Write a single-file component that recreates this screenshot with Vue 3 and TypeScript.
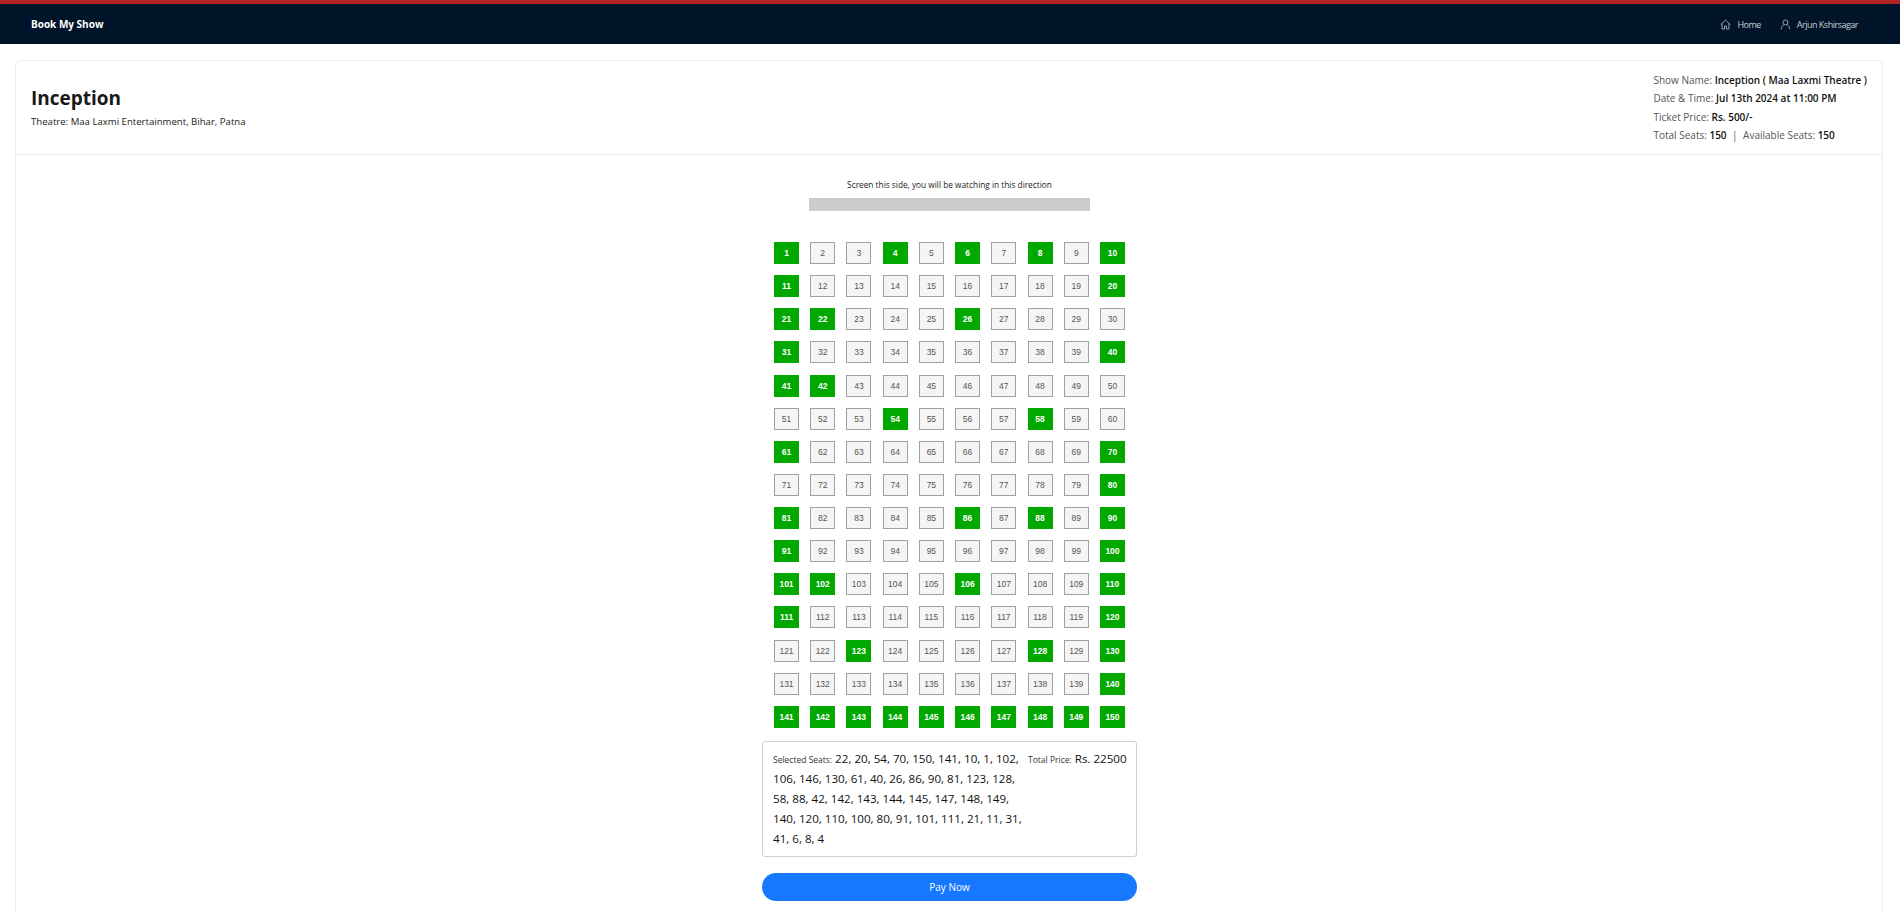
<script setup lang="ts">
const selected = [
  22, 20, 54, 70, 150, 141, 10, 1, 102, 106, 146, 130, 61, 40, 26, 86, 90, 81, 123, 128, 58, 88,
  42, 142, 143, 144, 145, 147, 148, 149, 140, 120, 110, 100, 80, 91, 101, 111, 21, 11, 31, 41, 6,
  8, 4,
];
const ticketPrice = 500;
const seats = Array.from({ length: 150 }, (_, i) => i + 1);

function isSelected(seat: number) {
  return selected.includes(seat);
}
</script>

<template>
  <div class="page">
    <header class="navbar">
      <span class="brand">Book My Show</span>
      <nav class="nav-links">
        <a class="nav-link">
          <svg viewBox="0 0 16 16" width="11" height="11" fill="none" stroke="currentColor" stroke-width="1.1">
            <path d="M1 8.2 8 1.6l7 6.6" />
            <path d="M3 6.6v7.9h3.6v-4.2h2.8v4.2H13V6.6" />
          </svg>
          Home
        </a>
        <a class="nav-link">
          <svg viewBox="0 0 16 16" width="11" height="11" fill="none" stroke="currentColor" stroke-width="1.1">
            <circle cx="8" cy="5" r="3.6" />
            <path d="M1.8 15c.4-3.6 2-5.6 3.6-6.2M14.2 15c-.4-3.6-2-5.6-3.6-6.2" />
          </svg>
          Arjun Kshirsagar
        </a>
      </nav>
    </header>

    <main class="card">
      <section class="card-head">
        <div>
          <h1>Inception</h1>
          <p class="theatre">Theatre: Maa Laxmi Entertainment, Bihar, Patna</p>
        </div>
        <div class="show-info">
          <p>Show Name: <b>Inception ( Maa Laxmi Theatre )</b></p>
          <p>Date &amp; Time: <b>Jul 13th 2024 at 11:00 PM</b></p>
          <p>Ticket Price: <b>Rs. 500/-</b></p>
          <p>Total Seats: <b>150</b><span class="sep">|</span>Available Seats: <b>150</b></p>
        </div>
      </section>

      <section class="card-body">
        <p class="screen-label">Screen this side, you will be watching in this direction</p>
        <div class="screen"></div>

        <div class="seats">
          <button
            v-for="seat in seats"
            :key="seat"
            class="seat"
            :class="{ selected: isSelected(seat) }"
          >
            {{ seat }}
          </button>
        </div>

        <div class="summary">
          <div class="summary-seats">
            <small>Selected Seats:</small> {{ selected.join(", ") }}
          </div>
          <div class="summary-price">
            <small>Total Price:</small> Rs. {{ selected.length * ticketPrice }}
          </div>
        </div>

        <button class="pay">Pay Now</button>
      </section>
    </main>
  </div>
</template>

<style>
html,
body {
  margin: 0;
  background: #fff;
  overflow: hidden;
}
</style>

<style scoped>
.page {
  height: 912px;
  overflow: hidden;
  font-family: "Open Sans", "Noto Sans", sans-serif;
  color: #1a1a1a;
}

.navbar {
  height: 40px;
  border-top: 4px solid #b22222;
  background: #001529;
  display: flex;
  align-items: center;
  justify-content: space-between;
  padding: 0 42px 0 31px;
}

.brand {
  color: #fff;
  font-size: 10px;
  font-weight: 700;
}

.nav-links {
  display: flex;
  gap: 19px;
}

.nav-link {
  display: flex;
  align-items: center;
  gap: 6px;
  color: #c8ccd2;
  font-size: 9px;
  letter-spacing: -0.5px;
}

.card {
  margin: 16px 17px 0 15px;
  border: 1px solid #ececec;
  border-radius: 6px;
  background: #fff;
}

.card-head {
  height: 94px;
  box-sizing: border-box;
  border-bottom: 1px solid #ececec;
  display: flex;
  justify-content: space-between;
  align-items: center;
  padding: 0 15px;
}

h1 {
  margin: 0 0 4.5px;
  font-size: 19px;
  font-weight: 700;
  line-height: 26px;
}

.theatre {
  margin: 0 0 2.5px;
  font-size: 9.6px;
}

.show-info {
  font-size: 10px;
  color: #555;
}

.show-info p {
  margin: 0;
  line-height: 18.5px;
}

.show-info b {
  color: #111;
  font-weight: 600;
}

.sep {
  margin: 0 5.5px;
}

.card-body {
  display: flex;
  flex-direction: column;
  align-items: center;
  padding: 0 0 32px 1px;
}

.screen-label {
  margin: 24px 0 7px;
  font-size: 8.3px;
  line-height: 12px;
}

.screen {
  width: 281px;
  height: 13px;
  background: #ccc;
}

.seats {
  margin-top: 31px;
  width: 351px;
  display: grid;
  grid-template-columns: repeat(10, 25px);
  justify-content: space-between;
  row-gap: 11.14px;
}

.seat {
  width: 25px;
  height: 22px;
  padding: 0;
  box-sizing: border-box;
  border: 1px solid #a0a0a0;
  background: #f5f5f5;
  color: #555;
  font-family: "Liberation Sans", Arial, sans-serif;
  font-size: 8.5px;
}

.seat.selected {
  border-color: #00a800;
  background: #00a800;
  color: #fff;
  font-weight: 700;
}

.summary {
  margin-top: 13px;
  width: 375px;
  height: 116px;
  box-sizing: border-box;
  border: 1px solid #d0d0d0;
  border-radius: 3px;
  padding: 7px 10px;
  display: flex;
  gap: 3px;
  font-size: 11.6px;
  line-height: 19.7px;
  color: #111;
}

.summary small {
  font-size: 8.5px;
  color: #333;
}

.summary-seats {
  width: 252px;
  flex: none;
}

.summary-price {
  white-space: nowrap;
}

.pay {
  margin-top: 16px;
  width: 375px;
  height: 28px;
  border: none;
  border-radius: 14px;
  background: #1677ff;
  color: #fff;
  font-family: inherit;
  font-size: 10px;
}
</style>
